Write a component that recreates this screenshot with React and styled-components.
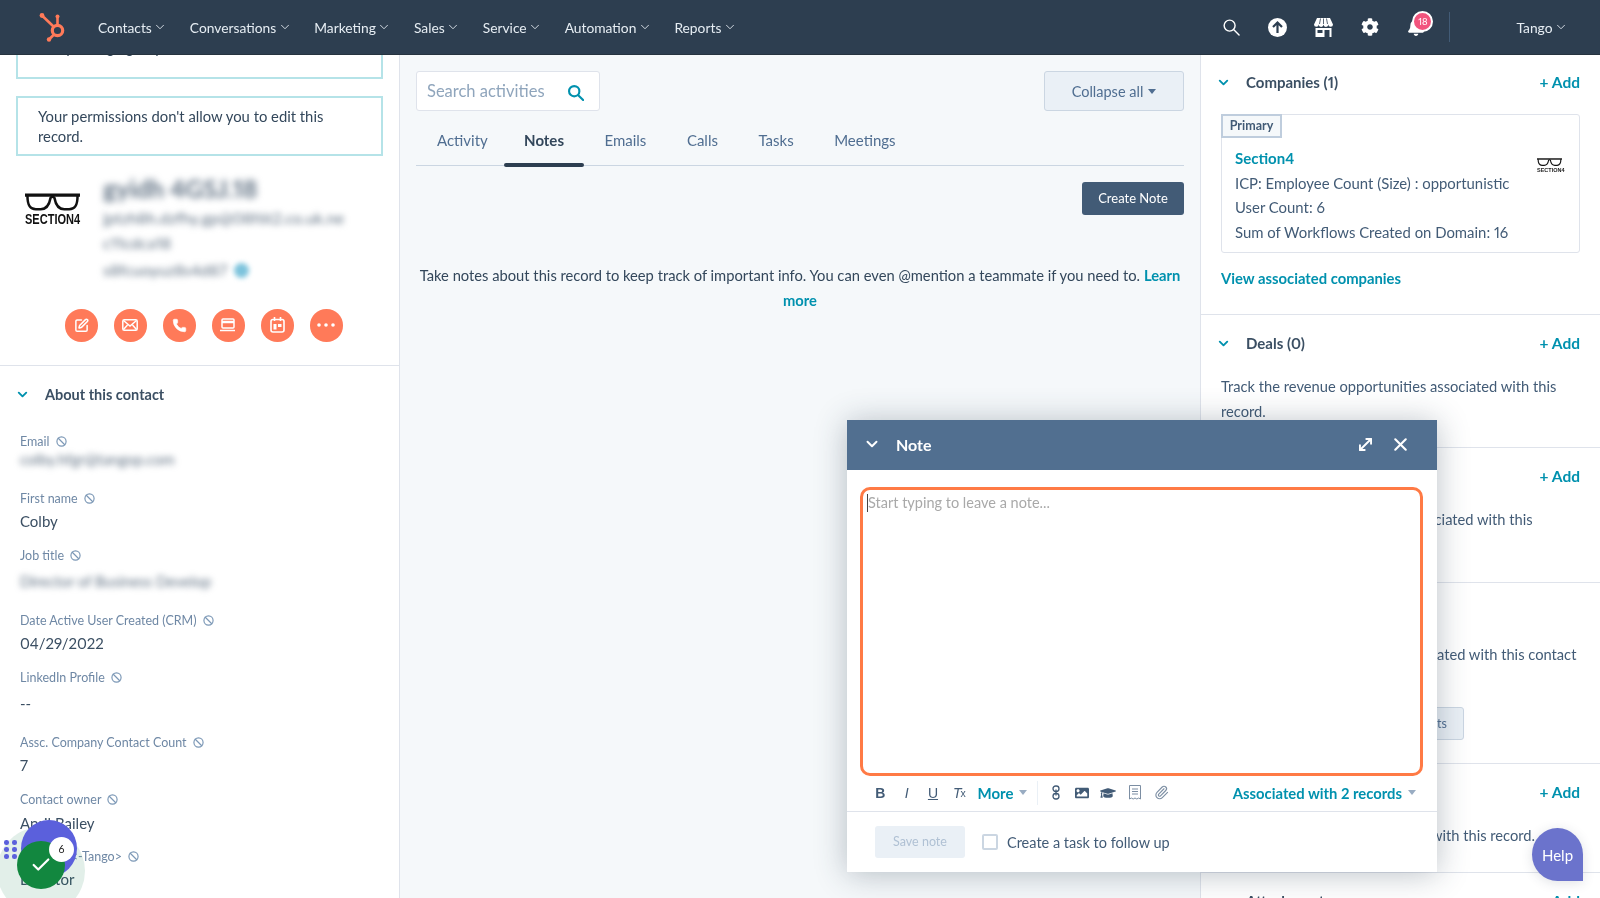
import React from "react";
import styled, { createGlobalStyle } from "styled-components";
import { ChevronDown, X, Paperclip, Ban, MoveDiagonal, Check, SquarePen, Phone } from "lucide-react";
import { FaCog, FaBell, FaGraduationCap, FaImage } from "react-icons/fa";

const GlobalStyle = createGlobalStyle`
  html, body {
    margin: 0;
    height: 100%;
    overflow: hidden;
    background: #fff;
    font-family: Lato, "Open Sans", sans-serif;
    font-variant-numeric: proportional-nums;
    color: #33475b;
  }
  * { box-sizing: border-box; }
`;

const navItems = ["Contacts", "Conversations", "Marketing", "Sales", "Service", "Automation", "Reports"];
const tabs = ["Activity", "Notes", "Emails", "Calls", "Tasks", "Meetings"];

function Magnifier({ size, color, weight }) {
  return (
    <svg width={size} height={size} viewBox="0 0 18 18" fill="none" stroke={color} strokeWidth={weight} strokeLinecap="round">
      <circle cx="7" cy="7" r="5.800" />
      <path d="M11.500 11.500L17 17" />
    </svg>
  );
}

function Glasses({ width }) {
  return (
    <svg width={width} viewBox="0 0 56 18" fill="none" stroke="#111" strokeWidth="2.6" style={{ display: "block" }}>
      <path d="M0 2.200h56" strokeWidth="3.200" />
      <path d="M2.500 3c0 7 1 13.500 8.500 13.500h5c7 0 9-6 10-11.500 1-1.500 3-1.500 4 0 1 5.500 3 11.500 10 11.500h5c7.500 0 8.500-6.500 8.500-13.500" />
    </svg>
  );
}

function HubLogo() {
  return (
    <svg width="30" height="30" viewBox="0 0 30 30" fill="none" stroke="#ff7a59" strokeWidth="2.6" strokeLinecap="round">
      <circle cx="19.500" cy="18.500" r="5.200" strokeWidth="3.200" />
      <path d="M19.500 13V6" />
      <path d="M15.500 14.500L5 4.500" />
      <path d="M15.500 23l-4 4" />
      <circle cx="19.500" cy="4.500" r="2" fill="#ff7a59" stroke="none" />
      <circle cx="4" cy="3.500" r="2.400" fill="#ff7a59" stroke="none" />
      <circle cx="11" cy="27.500" r="2.200" fill="#ff7a59" stroke="none" />
    </svg>
  );
}

function UploadIcon() {
  return (
    <svg width="19" height="19" viewBox="0 0 19 19">
      <circle cx="9.500" cy="9.500" r="9.500" fill="#fff" />
      <path d="M9.500 15V5M5 9l4.500-4.500L14 9" fill="none" stroke="#2d3e50" strokeWidth="2.200" />
    </svg>
  );
}

function StoreIcon() {
  return (
    <svg width="19" height="19" viewBox="0 0 19 19" fill="#fff">
      <path d="M3 0h13l3 6.500a2.300 2.300 0 0 1-4.700 0 2.400 2.400 0 0 1-4.800 0 2.400 2.400 0 0 1-4.800 0 2.300 2.300 0 0 1-4.700 0z" />
      <path d="M6.500.5L5.500 6M12.500.5l1 5.500M9.500.5V6" stroke="#2d3e50" strokeWidth=".8" />
      <path d="M1.500 10h16v9h-16zM3.500 12v3h5v-3zM10.500 12v7h5v-7z" fillRule="evenodd" />
    </svg>
  );
}

function ActionGlyph({ kind }) {
  if (kind === "note") return <SquarePen size={15} color="#fff" strokeWidth={2.400} />;
  if (kind === "phone") return <Phone size={15} color="#fff" fill="#fff" strokeWidth={1} />;
  if (kind === "more") {
    return (
      <svg width="18" height="4" viewBox="0 0 18 4" fill="#fff">
        <circle cx="2" cy="2" r="1.800" />
        <circle cx="9" cy="2" r="1.800" />
        <circle cx="16" cy="2" r="1.800" />
      </svg>
    );
  }
  if (kind === "mail") {
    return (
      <svg width="16" height="12" viewBox="0 0 16 12" fill="none" stroke="#fff" strokeWidth="1.500">
        <rect x=".8" y=".8" width="14.400" height="10.400" rx="1.500" />
        <path d="M1.500 1.500L8 7l6.500-5.500M1.500 10.500l4-4.500M14.500 10.500l-4-4.500" />
      </svg>
    );
  }
  if (kind === "screen") {
    return (
      <svg width="16" height="14" viewBox="0 0 16 14" fill="none" stroke="#fff" strokeWidth="1.500">
        <rect x="2" y="1" width="12" height="9" rx="1" />
        <path d="M2 4h12" strokeWidth="2.500" />
        <path d="M0 12.500h15" />
      </svg>
    );
  }
  return (
    <svg width="15" height="16" viewBox="0 0 15 16" fill="none" stroke="#fff" strokeWidth="1.600">
      <rect x="1" y="2.500" width="13" height="12.500" rx="2" />
      <path d="M4.500 0v4M10.500 0v4" />
      <rect x="3.500" y="7" width="3" height="5.500" fill="#fff" stroke="none" />
      <rect x="8" y="7" width="3.500" height="3" fill="#fff" stroke="none" />
    </svg>
  );
}

function Property({ label, value, blurred, pitch = 57, valueHeight = 28 }) {
  return (
    <PropRow $pitch={pitch}>
      <PropLabel>
        {label}
        <Ban size={11} strokeWidth={2.600} color="#7c98b6" />
      </PropLabel>
      <PropValue $h={valueHeight}>{blurred ? <Blur $size={15} $radius={3}>{value}</Blur> : value}</PropValue>
    </PropRow>
  );
}

function Section({ title, height, add = true, first, children }) {
  return (
    <RightSection $h={height} $first={first}>
      <SectionHead>
        <SectionChevron>
          <ChevronDown size={15} strokeWidth={3} color="#0091ae" />
        </SectionChevron>
        <SectionTitle>{title}</SectionTitle>
        {add && <AddLink>+ Add</AddLink>}
      </SectionHead>
      {children}
    </RightSection>
  );
}

export default function App() {
  return (
    <Page>
      <GlobalStyle />
      <TopNav>
        <LogoSlot>
          <HubLogo />
        </LogoSlot>
        <NavList>
          {navItems.map((item) => (
            <NavItem key={item}>
              {item}
              <ChevronDown size={14} strokeWidth={1.500} />
            </NavItem>
          ))}
        </NavList>
        <NavIcons>
          <NavIcon><Magnifier size={17} color="#fff" weight={1.500} /></NavIcon>
          <NavIcon><UploadIcon /></NavIcon>
          <NavIcon><StoreIcon /></NavIcon>
          <NavIcon><FaCog size={18} /></NavIcon>
          <NavIcon>
            <FaBell size={18} />
            <BellBadge>18</BellBadge>
          </NavIcon>
        </NavIcons>
        <NavDivider />
        <Account>
          Tango
          <ChevronDown size={14} strokeWidth={1.500} />
        </Account>
      </TopNav>

      <Columns>
        <LeftCol>
          <AlertBox $cut>Sorry, a large group</AlertBox>
          <AlertBox>Your permissions don't allow you to edit this record.</AlertBox>
          <Profile>
            <ProfileRow>
              <CompanyLogo>
                <Glasses width={55} />
                <LogoWord>SECTION4</LogoWord>
              </CompanyLogo>
              <ProfileText>
                <Blur $size={25} $radius={3.500} $strong>gyidh 4GSJ.18</Blur>
                <Blur $size={16} $radius={3} $top={3}>jptzh8h.dzfhy.gp@08f6t2.co.uk.ne</Blur>
                <Blur $size={16} $radius={3} $top={1}>c11cdca18</Blur>
                <MailLine>
                  <Blur $size={16} $radius={3} $top={3}>s8fcuoyuz8s4d87</Blur>
                  <BlueDot />
                </MailLine>
              </ProfileText>
            </ProfileRow>
            <ActionRow>
              {["note", "mail", "phone", "screen", "calendar", "more"].map((kind) => (
                <ActionCircle key={kind}>
                  <ActionGlyph kind={kind} />
                </ActionCircle>
              ))}
            </ActionRow>
          </Profile>
          <AboutHead>
            <ChevronDown size={15} strokeWidth={3} color="#0091ae" />
            About this contact
          </AboutHead>
          <Property label="Email" value="colby.hfgr@tangop.com" blurred valueHeight={18} />
          <Property label="First name" value="Colby" />
          <Property label="Job title" value="Director of Business Develop" blurred pitch={65} valueHeight={34} />
          <Property label="Date Active User Created (CRM)" value="04/29/2022" />
          <Property label="LinkedIn Profile" value="--" pitch={65} valueHeight={33} />
          <Property label="Assc. Company Contact Count" value="7" />
          <Property label="Contact owner" value="April Bailey" valueHeight={30} />
          <Property label="Owner S <-Tango>" value="Director" />
        </LeftCol>

        <MidCol>
          <SearchRow>
            <SearchBox>
              <SearchHint>Search activities</SearchHint>
              <SearchGlyph>
                <Magnifier size={16} color="#0091ae" weight={2.400} />
              </SearchGlyph>
            </SearchBox>
            <CollapseButton>
              Collapse all
              <Caret $color="#506e91" />
            </CollapseButton>
          </SearchRow>
          <TabBar>
            {tabs.map((tab) => (
              <Tab key={tab} $active={tab === "Notes"}>{tab}</Tab>
            ))}
          </TabBar>
          <CreateRow>
            <CreateButton>Create Note</CreateButton>
          </CreateRow>
          <EmptyText>
            Take notes about this record to keep track of important info. You can even @mention a teammate if you need to.{" "}
            <LearnLink>Learn more</LearnLink>
          </EmptyText>
        </MidCol>

        <RightCol>
          <Section title="Companies (1)" height={260} first>
            <CompanyCard>
              <PrimaryTag>Primary</PrimaryTag>
              <CardBody>
                <div>
                  <CardLink>Section4</CardLink>
                  <CardLine>ICP: Employee Count (Size) : opportunistic</CardLine>
                  <CardLine>User Count: 6</CardLine>
                  <CardLine>Sum of Workflows Created on Domain: 16</CardLine>
                </div>
                <MiniLogo>
                  <Glasses width={25} />
                  <MiniWord>SECTION4</MiniWord>
                </MiniLogo>
              </CardBody>
            </CompanyCard>
            <ViewLink>View associated companies</ViewLink>
          </Section>
          <Section title="Deals (0)" height={133}>
            <SectionText>Track the revenue opportunities associated with this record.</SectionText>
          </Section>
          <Section title="Tickets (0)" height={135}>
            <SectionText>Track the customer requests associated with this record.</SectionText>
          </Section>
          <Section title="Lists" height={181} add={false}>
            <SectionText>Track the marketing events associated with this contact</SectionText>
            <GhostButton>View associated contact lists</GhostButton>
          </Section>
          <Section title="Quotes (0)" height={109}>
            <SectionText>Track the sale quotes associated with this record.</SectionText>
          </Section>
          <Section title="Attachments" height={60} />
        </RightCol>
      </Columns>

      <NoteModal>
        <ModalHead>
          <ChevronDown size={18} strokeWidth={2.600} />
          <ModalTitle>Note</ModalTitle>
          <MoveDiagonal size={19} strokeWidth={2.400} />
          <X size={21} strokeWidth={2.400} />
        </ModalHead>
        <NoteField>
          <CaretLine />
          Start typing to leave a note...
        </NoteField>
        <Toolbar>
          <ToolCell $bold>B</ToolCell>
          <ToolCell $italic>I</ToolCell>
          <ToolCell $underline>U</ToolCell>
          <ToolCell $italic>T<ClearMark>x</ClearMark></ToolCell>
          <MoreLink>
            More
            <Caret $color="#99acc2" />
          </MoreLink>
          <ToolDivider />
          <ToolCell>
            <svg width="8" height="15" viewBox="0 0 8 15" fill="none" stroke="#425b76" strokeWidth="1.300">
              <rect x="1" y="1" width="6" height="5.500" rx="2.700" />
              <rect x="1" y="8.500" width="6" height="5.500" rx="2.700" />
              <path d="M4 4.500v6" />
            </svg>
          </ToolCell>
          <ToolCell><FaImage size={14} color="#425b76" /></ToolCell>
          <ToolCell><FaGraduationCap size={16} color="#425b76" /></ToolCell>
          <ToolCell>
            <svg width="12" height="15" viewBox="0 0 12 15" fill="none" stroke="#7c8ea3" strokeWidth="1">
              <path d="M.5.500h11v13.500l-1.800-1-1.900 1-1.800-1-1.800 1-1.900-1-1.800 1zM3 4h6M3 6.500h6M3 9h6" />
            </svg>
          </ToolCell>
          <ToolCell><Paperclip size={15} color="#7c8ea3" strokeWidth={1.800} /></ToolCell>
          <AssocLink>
            Associated with 2 records
            <Caret $color="#99acc2" />
          </AssocLink>
        </Toolbar>
        <ModalFoot>
          <SaveButton>Save note</SaveButton>
          <CheckBox />
          <FollowLabel>Create a task to follow up</FollowLabel>
        </ModalFoot>
      </NoteModal>

      <HelpButton>Help</HelpButton>

      <Halo />
      <GripDots>
        {[0, 1, 2, 3, 4, 5].map((n) => <i key={n} />)}
      </GripDots>
      <PurpleDisc>
        <svg width="10" height="8" viewBox="0 0 10 8" fill="none" stroke="#fff" strokeWidth="1.600" strokeLinecap="round">
          <path d="M1 7V4M5 7V1M9 7V3" />
        </svg>
      </PurpleDisc>
      <GreenDisc>
        <Check size={22} color="#fff" strokeWidth={2.400} />
      </GreenDisc>
      <CountBadge>6</CountBadge>
    </Page>
  );
}

const Page = styled.div`
  position: relative;
  width: 100vw;
  height: 100vh;
  overflow: hidden;
  display: flex;
  flex-direction: column;
  filter: blur(0.4px);
`;

const TopNav = styled.header`
  position: relative;
  z-index: 2;
  flex: 0 0 55px;
  display: flex;
  align-items: center;
  background: #2d3e50;
  border-bottom: 1px solid #26333f;
  color: #e6edf3;
`;

const LogoSlot = styled.div`
  width: 98px;
  padding-left: 38px;
  display: flex;
`;

const NavList = styled.nav`
  display: flex;
  gap: 22.5px;
`;

const NavItem = styled.span`
  display: flex;
  align-items: center;
  gap: 1.5px;
  font-size: 13.8px;
`;

const NavIcons = styled.div`
  margin-left: auto;
  display: flex;
  gap: 21px;
  color: #fff;
`;

const NavIcon = styled.div`
  position: relative;
  width: 25px;
  height: 25px;
  display: flex;
  align-items: center;
  justify-content: center;
`;

const BellBadge = styled.span`
  position: absolute;
  top: -4px;
  left: 9px;
  width: 21px;
  height: 21px;
  border-radius: 50%;
  border: 2px solid #fff;
  background: #f2547d;
  color: #fff;
  font-size: 9.5px;
  line-height: 17px;
  text-align: center;
`;

const NavDivider = styled.div`
  width: 1px;
  height: 30px;
  margin: 0 66px 0 21px;
  background: #425b76;
`;

const Account = styled.div`
  display: flex;
  align-items: center;
  gap: 1.5px;
  margin-right: 32px;
  font-size: 13.8px;
`;

const Columns = styled.main`
  flex: 1;
  min-height: 0;
  display: grid;
  grid-template-columns: 400px 801px 399px;
`;

const LeftCol = styled.aside`
  overflow: hidden;
  border-right: 1px solid #dfe3eb;
  background: #fff;
`;

const AlertBox = styled.div`
  width: 367px;
  height: 60px;
  margin: ${(p) => (p.$cut ? "-36px 0 17px 16px" : "0 0 0 16px")};
  padding: ${(p) => (p.$cut ? "16px 20px 0" : "8px 20px 0")};
  border: 2px solid #b5e3e8;
  font-size: 14.8px;
  line-height: 20px;
  overflow: hidden;
`;

const Profile = styled.section`
  height: 210px;
  padding-top: 17px;
  border-bottom: 1px solid #dfe3eb;
`;

const ProfileRow = styled.div`
  display: flex;
  padding-left: 25px;
`;

const CompanyLogo = styled.div`
  width: 78px;
  padding-top: 20px;
  display: flex;
  flex-direction: column;
`;

const LogoWord = styled.div`
  width: 55px;
  margin-top: 2px;
  font-family: "Liberation Sans", sans-serif;
  font-weight: 700;
  font-size: 14.5px;
  line-height: 13px;
  color: #111;
  white-space: nowrap;
  transform: scaleX(0.76);
  transform-origin: left center;
`;

const ProfileText = styled.div`
  display: flex;
  flex-direction: column;
  align-items: flex-start;
`;

const Blur = styled.div`
  margin-top: ${(p) => p.$top || 0}px;
  font-size: ${(p) => p.$size}px;
  line-height: ${(p) => (p.$size > 20 ? 30 : 24)}px;
  font-weight: ${(p) => (p.$strong ? 700 : 400)};
  color: #5f7082;
  filter: blur(${(p) => p.$radius}px);
  white-space: nowrap;
`;

const MailLine = styled.div`
  display: flex;
  align-items: center;
  gap: 7px;
`;

const BlueDot = styled.span`
  width: 15px;
  height: 15px;
  margin-top: 3px;
  border-radius: 50%;
  background: #7cc3dc;
  filter: blur(2.5px);
`;

const ActionRow = styled.div`
  display: flex;
  gap: 16.5px;
  margin-top: 27px;
  padding-left: 65px;
`;

const ActionCircle = styled.div`
  width: 32.5px;
  height: 32.5px;
  border-radius: 50%;
  background: #ff7a59;
  display: flex;
  align-items: center;
  justify-content: center;
`;

const AboutHead = styled.div`
  height: 56px;
  margin-bottom: 10px;
  padding-left: 15px;
  display: flex;
  align-items: center;
  gap: 15px;
  font-size: 14.5px;
  font-weight: 700;
  color: #3b4f63;
`;

const PropRow = styled.div`
  height: ${(p) => p.$pitch}px;
  padding-left: 20px;
`;

const PropLabel = styled.div`
  display: flex;
  align-items: center;
  gap: 6px;
  height: 18px;
  font-size: 12.5px;
  color: #6f88a5;
`;

const PropValue = styled.div`
  display: flex;
  align-items: center;
  height: ${(p) => p.$h}px;
  font-size: 15px;
  color: #3b4f63;
  white-space: nowrap;
`;

const MidCol = styled.section`
  padding: 16px 16px 0 16px;
  background: #f5f8fa;
  border-right: 1px solid #dfe3eb;
`;

const SearchRow = styled.div`
  display: flex;
  justify-content: space-between;
`;

const SearchBox = styled.div`
  width: 184px;
  height: 40px;
  padding: 0 15px 0 10px;
  display: flex;
  align-items: center;
  justify-content: space-between;
  background: #fff;
  border: 1px solid #dfe3eb;
  border-radius: 3px;
`;

const SearchHint = styled.span`
  font-size: 16.5px;
  color: #8fa5bc;
`;

const SearchGlyph = styled.span`
  display: flex;
  margin-top: 3px;
`;

const CollapseButton = styled.div`
  width: 140px;
  height: 40px;
  display: flex;
  align-items: center;
  justify-content: center;
  gap: 5px;
  background: #eaf0f6;
  border: 1px solid #cbd6e2;
  border-radius: 3px;
  font-size: 14.5px;
  color: #506e91;
`;

const Caret = styled.span`
  width: 0;
  height: 0;
  border-left: 4.5px solid transparent;
  border-right: 4.5px solid transparent;
  border-top: 5px solid ${(p) => p.$color};
`;

const TabBar = styled.div`
  display: flex;
  height: 55px;
  padding-top: 7px;
  border-bottom: 1px solid #cbd6e2;
`;

const Tab = styled.div`
  position: relative;
  padding: 0 20.25px;
  height: 47px;
  line-height: 44px;
  font-size: 15px;
  font-weight: ${(p) => (p.$active ? 700 : 400)};
  color: ${(p) => (p.$active ? "#33475b" : "#506e91")};
  &:first-child {
    padding: 0 16px 0 21px;
  }
  &::after {
    content: "";
    display: ${(p) => (p.$active ? "block" : "none")};
    position: absolute;
    left: 0;
    right: 0;
    bottom: -2px;
    height: 4px;
    border-radius: 2px;
    background: #2d3e50;
  }
`;

const CreateRow = styled.div`
  display: flex;
  justify-content: flex-end;
  margin-top: 16px;
`;

const CreateButton = styled.div`
  width: 102px;
  height: 33px;
  line-height: 33px;
  text-align: center;
  background: #425b76;
  border-radius: 3px;
  color: #fff;
  font-size: 13px;
`;

const EmptyText = styled.p`
  margin: 48px 0 0;
  text-align: center;
  font-size: 14.73px;
  line-height: 25px;
`;

const LearnLink = styled.span`
  color: #0091ae;
  font-weight: 700;
`;

const RightCol = styled.aside`
  overflow: hidden;
  background: #fff;
`;

const RightSection = styled.section`
  min-height: ${(p) => p.$h}px;
  padding: ${(p) => (p.$first ? "17px" : "18px")} 20px 0;
  border-bottom: 1px solid #dfe3eb;
`;

const SectionHead = styled.div`
  display: flex;
  align-items: center;
  height: 20px;
`;

const SectionChevron = styled.span`
  display: flex;
  margin-left: -5px;
`;

const SectionTitle = styled.span`
  margin-left: 15px;
  font-size: 15px;
  font-weight: 700;
  color: #3b4f63;
`;

const AddLink = styled.span`
  margin-left: auto;
  font-size: 15.5px;
  font-weight: 700;
  color: #0091ae;
`;

const CompanyCard = styled.div`
  height: 139px;
  margin-top: 22px;
  border: 1px solid #dfe3eb;
  border-radius: 3px;
`;

const PrimaryTag = styled.div`
  width: 61px;
  height: 24px;
  margin: -1px 0 0 -1px;
  line-height: 20px;
  text-align: center;
  font-size: 12.5px;
  font-weight: 700;
  background: #f5f8fa;
  border: 2px solid #bfcddd;
  color: #425b76;
`;

const CardBody = styled.div`
  display: flex;
  justify-content: space-between;
  padding: 8px 17px 0 13px;
`;

const CardLink = styled.div`
  height: 24.5px;
  line-height: 24.5px;
  font-size: 15px;
  font-weight: 700;
  color: #0091ae;
`;

const CardLine = styled.div`
  height: 24.5px;
  line-height: 24.5px;
  font-size: 14.9px;
  color: #425b76;
  white-space: nowrap;
`;

const MiniLogo = styled.div`
  margin-top: 12px;
  width: 25px;
`;

const MiniWord = styled.div`
  margin-top: 1px;
  font-family: "Liberation Sans", sans-serif;
  font-weight: 700;
  font-size: 5.5px;
  line-height: 6px;
  color: #222;
  white-space: nowrap;
`;

const ViewLink = styled.div`
  margin-top: 15px;
  line-height: 20px;
  font-size: 14.8px;
  font-weight: 700;
  color: #0091ae;
`;

const SectionText = styled.p`
  margin: 21px 0 0;
  font-size: 14.7px;
  line-height: 24.5px;
  color: #425b76;
`;

const GhostButton = styled.div`
  width: 243px;
  height: 33px;
  margin-top: 40px;
  padding-right: 16px;
  line-height: 31px;
  text-align: right;
  font-size: 12.5px;
  color: #506e91;
  background: #eaf0f6;
  border: 1px solid #cbd6e2;
  border-radius: 3px;
  white-space: nowrap;
`;

const NoteModal = styled.div`
  position: absolute;
  z-index: 3;
  left: 847px;
  top: 420px;
  width: 590px;
  height: 452px;
  display: flex;
  flex-direction: column;
  background: #fff;
  box-shadow: 0 2px 30px rgba(45, 62, 80, 0.32);
`;

const ModalHead = styled.div`
  flex: 0 0 50px;
  padding: 0 26px 2px 16px;
  display: flex;
  align-items: center;
  gap: 15px;
  background: #516f90;
  color: #fff;
`;

const ModalTitle = styled.span`
  flex: 1;
  font-size: 16px;
  font-weight: 700;
`;

const NoteField = styled.div`
  position: relative;
  flex: 0 0 289px;
  margin: 17px 14px 0 13px;
  padding: 3px 5px;
  border: 3px solid #ff7a45;
  border-radius: 10px;
  font-size: 14.5px;
  line-height: 20px;
  color: #a9a9a9;
`;

const CaretLine = styled.span`
  position: absolute;
  left: 4px;
  top: 4px;
  width: 1px;
  height: 18px;
  background: #444;
`;

const Toolbar = styled.div`
  flex: 0 0 36px;
  padding: 0 21px 2px 20px;
  display: flex;
  align-items: center;
  border-bottom: 1px solid #dfe3eb;
`;

const ToolCell = styled.div`
  position: relative;
  width: 26.4px;
  height: 26px;
  display: flex;
  align-items: center;
  justify-content: center;
  font-family: "Liberation Sans", sans-serif;
  font-size: 14px;
  color: #425b76;
  font-weight: ${(p) => (p.$bold ? 700 : 400)};
  font-style: ${(p) => (p.$italic ? "italic" : "normal")};
  text-decoration: ${(p) => (p.$underline ? "underline" : "none")};
`;

const ClearMark = styled.sub`
  font-size: 10.5px;
  font-style: normal;
  margin-left: -1px;
`;

const MoreLink = styled.div`
  display: flex;
  align-items: center;
  gap: 5px;
  margin-left: 5px;
  font-size: 15px;
  font-weight: 700;
  color: #0091ae;
`;

const ToolDivider = styled.div`
  width: 1px;
  height: 24px;
  margin: 0 5px 0 10px;
  background: #eaf0f6;
`;

const AssocLink = styled.div`
  display: flex;
  align-items: center;
  gap: 6px;
  margin-left: auto;
  font-size: 14.8px;
  font-weight: 700;
  color: #0091ae;
`;

const ModalFoot = styled.div`
  flex: 1;
  padding-left: 28px;
  display: flex;
  align-items: center;
`;

const SaveButton = styled.div`
  width: 90px;
  height: 32px;
  line-height: 32px;
  text-align: center;
  background: #eaf0f6;
  border-radius: 3px;
  font-size: 12.5px;
  color: #b0c1d4;
`;

const CheckBox = styled.div`
  width: 16px;
  height: 16px;
  margin: 0 9px 0 17px;
  border: 2px solid #cbd6e2;
  border-radius: 2px;
`;

const FollowLabel = styled.span`
  font-size: 14.5px;
  color: #425b76;
`;

const HelpButton = styled.div`
  position: absolute;
  z-index: 4;
  left: 1532px;
  top: 828px;
  width: 51px;
  height: 53px;
  display: flex;
  align-items: center;
  justify-content: center;
  border-radius: 50% 50% 0 50%;
  background: #6b73cc;
  color: #fff;
  font-size: 15px;
  box-shadow: 0 2px 12px rgba(45, 62, 80, 0.15);
`;

const Halo = styled.div`
  position: absolute;
  z-index: 4;
  left: -3px;
  top: 827px;
  width: 88px;
  height: 88px;
  border-radius: 50%;
  background: rgba(20, 120, 70, 0.12);
`;

const GripDots = styled.div`
  position: absolute;
  z-index: 5;
  left: 4px;
  top: 840px;
  display: grid;
  grid-template-columns: 4.5px 4.5px;
  gap: 2.5px 3.5px;
  i {
    width: 4.5px;
    height: 4.5px;
    border-radius: 50%;
    background: #5b60dc;
  }
`;

const PurpleDisc = styled.div`
  position: absolute;
  z-index: 5;
  left: 21px;
  top: 820px;
  width: 56px;
  height: 57px;
  padding: 15px 0 0 20px;
  border-radius: 50%;
  background: #5b60dc;
`;

const GreenDisc = styled.div`
  position: absolute;
  z-index: 6;
  left: 17px;
  top: 841px;
  width: 48px;
  height: 48px;
  display: flex;
  align-items: center;
  justify-content: center;
  border-radius: 50%;
  background: #12873f;
`;

const CountBadge = styled.div`
  position: absolute;
  z-index: 7;
  left: 49px;
  top: 837px;
  width: 25px;
  height: 25px;
  line-height: 25px;
  text-align: center;
  border-radius: 50%;
  background: #fff;
  font-size: 10.5px;
  color: #222;
`;
